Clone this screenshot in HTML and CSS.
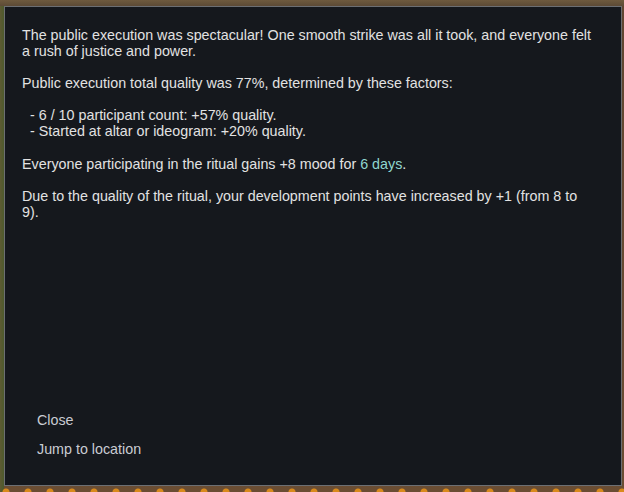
FILE: index.html
```html
<!DOCTYPE html>
<html>
<head>
<meta charset="utf-8">
<link rel="stylesheet" href="styles.css">
</head>
<body>
<div class="map">
  <div class="dialog">
    <div class="message">
      <p>The public execution was spectacular! One smooth strike was all it took, and everyone felt a rush of justice and power.</p>
      <p>Public execution total quality was 77%, determined by these factors:</p>
      <ul class="factors">
        <li>- 6 / 10 participant count: +57% quality.</li>
        <li>- Started at altar or ideogram: +20% quality.</li>
      </ul>
      <p>Everyone participating in the ritual gains +8 mood for <span class="hl">6 days</span>.</p>
      <p>Due to the quality of the ritual, your development points have increased by +1 (from 8 to 9).</p>
    </div>
    <div class="options">
      <div class="option">Close</div>
      <div class="option">Jump to location</div>
    </div>
  </div>
</div>
</body>
</html>
```
FILE: styles.css
```css
html, body {
  margin: 0;
  padding: 0;
}
body {
  width: 624px;
  height: 492px;
  overflow: hidden;
}
.map {
  width: 624px;
  height: 492px;
  box-sizing: border-box;
  padding: 6px 2px 6px 4px;
  background:
    radial-gradient(circle at 6px 6px, #d98a1c 0 3px, transparent 4px) 0 486px / 22px 8px repeat-x,
    linear-gradient(to bottom, #6e5a3e 0, #5c4a36 6px, transparent 6px),
    linear-gradient(to right, #5d5a33 0, #4d5a2c 4px, transparent 4px),
    linear-gradient(to bottom, #5f4632 0, #6a4d33 100%);
}
.dialog {
  height: 480px;
  box-sizing: border-box;
  border: 1px solid #6c6f73;
  background: #15181d;
  display: flex;
  flex-direction: column;
  padding: 20px 24px 28px 17px;
  font-family: "Liberation Sans", Arial, sans-serif;
  font-size: 14.3px;
  line-height: 16px;
  color: #e2e2e2;
}
.message {
  flex: 1;
}
.message p {
  margin: 0 0 16px 0;
}
.factors {
  list-style: none;
  margin: 0 0 17px 0;
  padding: 0 0 0 8px;
}
.hl {
  color: #8fd6cf;
}
.options {
  display: flex;
  flex-direction: column;
  gap: 13px;
  padding-left: 15px;
}
.option {
  color: #c9ccd3;
  line-height: 16px;
}
```
